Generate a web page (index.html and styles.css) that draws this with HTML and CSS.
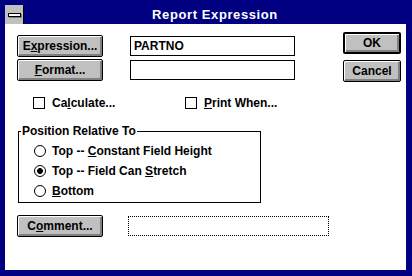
FILE: index.html
```html
<!DOCTYPE html>
<html lang="en">
<head>
    <meta charset="UTF-8">
    <title>Report Expression</title>
    <link rel="stylesheet" href="styles.css">
</head>
<body>

<div class="dialog">
    <div class="titlebar">
        <div class="sysmenu"><span class="dash"></span></div>
        <div class="caption">Report Expression</div>
    </div>
    <div class="client">
        <div class="top">
            <div class="fields">
                <div class="row">
                    <button class="btn">E<u>x</u>pression...</button>
                    <div class="field">PARTNO</div>
                </div>
                <div class="row">
                    <button class="btn"><u>F</u>ormat...</button>
                    <div class="field"></div>
                </div>
            </div>
            <div class="actions">
                <button class="btn default">OK</button>
                <button class="btn">Cancel</button>
            </div>
        </div>

        <div class="checks">
            <label class="check"><span class="box"></span><span>Ca<u>l</u>culate...</span></label>
            <label class="check"><span class="box"></span><span><u>P</u>rint When...</span></label>
        </div>

        <fieldset class="group">
            <legend>Position Relative To</legend>
            <div class="option"><span class="radio"></span><span>Top -- <u>C</u>onstant Field Height</span></div>
            <div class="option"><span class="radio on"></span><span>Top -- Field Can <u>S</u>tretch</span></div>
            <div class="option"><span class="radio"></span><span><u>B</u>ottom</span></div>
        </fieldset>

        <div class="row comment-row">
            <button class="btn">C<u>o</u>mment...</button>
            <div class="field dotted"></div>
        </div>
    </div>
</div>

</body>
</html>
```

FILE: styles.css
```css
body {
    margin: 0;
    font-family: "Liberation Sans", Arial, sans-serif;
    font-size: 12px;
    font-weight: bold;
    color: #000;
}
.dialog {
    width: 412px;
    height: 276px;
    box-sizing: border-box;
    padding: 5px 6px 6px 5px;
    background-color: #000080;
    display: flex;
    flex-direction: column;
}
.titlebar {
    height: 19px;
    display: flex;
}
.sysmenu {
    width: 18px;
    background-color: #c0c0c0;
    border-right: 1px solid #000;
    display: flex;
    align-items: center;
    justify-content: center;
}
.dash {
    width: 11px;
    height: 2px;
    background-color: #fff;
    border: 1px solid #000;
    box-shadow: 1px 1px 0 #808080;
}
.caption {
    flex: 1;
    color: #fff;
    font-size: 13px;
    letter-spacing: 0.6px;
    line-height: 19px;
    text-align: center;
}
.client {
    flex: 1;
    background-color: #fff;
}
.top {
    display: flex;
}
.fields {
    margin: 11px 0 0 12px;
    display: flex;
    flex-direction: column;
    gap: 2px;
}
.row {
    display: flex;
    align-items: center;
}
.btn {
    width: 86px;
    height: 22px;
    box-sizing: border-box;
    padding: 0;
    border: 1px solid #000;
    border-radius: 2px;
    background-color: #c0c0c0;
    box-shadow: inset 1px 1px 0 #fff, inset -2px -2px 0 #808080;
    font: inherit;
    color: #000;
}
u {
    text-underline-offset: 1px;
}
.field {
    width: 165px;
    height: 20px;
    box-sizing: border-box;
    margin-left: 27px;
    padding-left: 3px;
    border: 1px solid #000;
    line-height: 18px;
}
.actions {
    margin: 8px 5px 0 auto;
    display: flex;
    flex-direction: column;
    gap: 6px;
}
.actions .btn {
    width: 58px;
}
.actions .default {
    border-width: 2px;
}
.checks {
    margin-top: 13px;
    padding-left: 28px;
    height: 16px;
    display: grid;
    grid-template-columns: 152px auto;
}
.check {
    display: flex;
    align-items: center;
    gap: 7px;
}
.box {
    width: 12px;
    height: 12px;
    box-sizing: border-box;
    border: 1px solid #000;
}
.group {
    width: 243px;
    box-sizing: border-box;
    margin: 13px 0 0 13px;
    padding: 3px 0 1px 15px;
    border: 1px solid #000;
}
.group legend {
    margin-left: -13px;
    padding: 0 1px;
    line-height: 14px;
}
.option {
    height: 20px;
    display: flex;
    align-items: center;
    gap: 6px;
}
.radio {
    width: 12px;
    height: 12px;
    box-sizing: border-box;
    border: 1px solid #000;
    border-radius: 50%;
}
.radio.on {
    background: radial-gradient(circle, #000 0 2.6px, #fff 3.2px);
}
.comment-row {
    margin: 12px 0 0 12px;
}
.field.dotted {
    width: 201px;
    margin-left: 25px;
    border-style: dotted;
}
```
